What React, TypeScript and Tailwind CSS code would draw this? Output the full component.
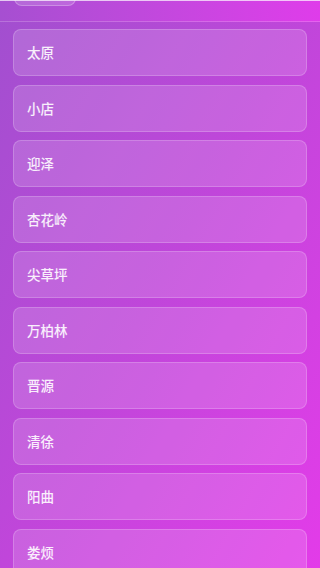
import React from "react";

const places = ["太原", "小店", "迎泽", "杏花岭", "尖草坪", "万柏林", "晋源", "清徐", "阳曲", "娄烦"];

const PlaceCard = ({ name }: { name: string }) => {
  return (
    <div
      className="w-full h-[47px] flex items-center px-[13px] rounded-lg border border-white/20 bg-white/15 shrink-0"
      role="button">
      <span className="text-[13.5px] font-medium text-white/90">{name}</span>
    </div>
  );
};

export default function App() {
  return (
    <div
      className="w-[320px] h-[568px] overflow-hidden flex flex-col bg-gradient-to-br from-[#a14fcf] via-[#c046da] to-[#e33be9]"
      style={{ fontFamily: '"Noto Sans CJK SC", "Noto Sans", sans-serif' }}>
      <div className="h-[22px] shrink-0 flex flex-col overflow-hidden border-b border-white/20 bg-gradient-to-r from-[#a64fd1] to-[#df3cea]">
        <div className="h-px bg-white/70 shrink-0" />
        <div className="px-[14px]">
          <div className="w-[62px] h-[30px] -mt-[25px] rounded-lg border border-white/25 bg-white/15" />
        </div>
      </div>
      <div className="flex flex-col gap-[8.5px] px-[13px] pt-[7px]">
        {places.map((p) => (
          <PlaceCard key={p} name={p} />
        ))}
      </div>
    </div>
  );
}
